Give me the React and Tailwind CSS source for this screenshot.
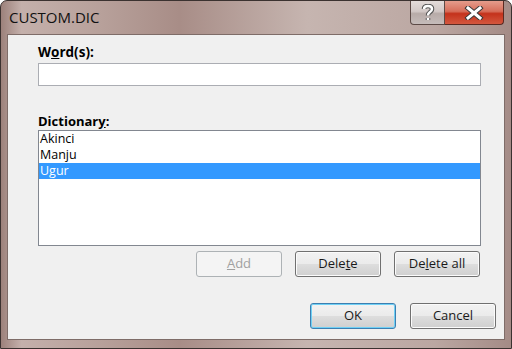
import React from 'react';

const FONT = { fontFamily: '"Open Sans", "Liberation Sans", sans-serif' };

// Win7 push button
const Button = ({ children, disabled, primary }) => {
  if (disabled) {
    return (
      <div className="w-[86px] h-[26px] rounded-[3px] border border-[#adb2b5] bg-[#f4f4f4] flex items-center justify-center text-[13px] text-[#a0a0a0]">
        {children}
      </div>
    );
  }
  return (
    <div
      className={
        'w-[86px] h-[26px] rounded-[3px] border flex items-center justify-center text-[13px] text-[#1a1a1a] bg-[linear-gradient(180deg,#f2f2f2_0%,#ebebeb_48%,#dddddd_52%,#cfcfcf_100%)] ' +
        (primary
          ? 'border-[#3c7fb1] shadow-[inset_0_0_0_1px_#6fd0f5]'
          : 'border-[#707070] shadow-[inset_0_0_0_1px_#fbfbfb]')
      }
    >
      {children}
    </div>
  );
};

const App = () => {
  const words = ['Akinci', 'Manju', 'Ugur'];
  const selected = 'Ugur';

  return (
    <div
      style={FONT}
      className="w-[512px] h-[349px] flex flex-col border border-[#3b3230] rounded-t-[7px] bg-[linear-gradient(90deg,#9c817b_0%,#c4b0ab_4%,#b7a09a_20%,#a88d87_35%,#c6b5b0_60%,#bba7a2_85%,#a48b86_100%)] overflow-hidden"
    >
      {/* TITLE BAR */}
      <div className="h-[33px] flex items-start shrink-0">
        <p className="pl-[8px] pt-[6px] text-[15px] leading-[20px] text-[#111]">CUSTOM.DIC</p>
        <div className="ml-auto mr-[7px] flex">
          <div className="w-[35px] h-[24px] rounded-bl-[4px] border border-t-0 border-[#5c4a46] bg-[linear-gradient(180deg,#e4dcda_0%,#d2c8c6_45%,#b7aba8_55%,#c6bcba_100%)] flex items-center justify-center">
            <svg width="14" height="18" viewBox="0 0 14 18">
              <path d="M3 5 Q3 2 7 2 Q11 2 11 5 Q11 7 8.5 8.5 Q7 9.5 7 11.5 M7 14 L7 16" fill="none" stroke="#555" strokeWidth="4.5" />
              <path d="M3 5 Q3 2 7 2 Q11 2 11 5 Q11 7 8.5 8.5 Q7 9.5 7 11.5 M7 14 L7 16" fill="none" stroke="#fff" strokeWidth="2.5" />
            </svg>
          </div>
          <div className="w-[59px] h-[24px] rounded-br-[4px] border border-l-0 border-t-0 border-[#5c2a22] bg-[linear-gradient(180deg,#e59c8c_0%,#d66e5a_45%,#c4321c_55%,#d4573e_100%)] flex items-center justify-center">
            <svg width="20" height="14" viewBox="0 0 20 14">
              <path d="M4 2 L16 12 M16 2 L4 12" stroke="#3a3a3a" strokeWidth="5" strokeLinecap="square" />
              <path d="M4 2 L16 12 M16 2 L4 12" stroke="#ffffff" strokeWidth="3" strokeLinecap="square" />
            </svg>
          </div>
        </div>
      </div>

      {/* CLIENT AREA */}
      <div className="flex-1 mx-[6px] mb-[8px] border border-[#7e6c68] bg-[#f0f0f0] flex flex-col pl-[30px] pr-[23px] text-[13px] text-black">
        <p className="mt-[8px] font-bold leading-[18px] text-[13.5px]">
          W<u>o</u>rd(s):
        </p>
        <div className="mt-[2px] h-[23px] border border-[#abadb3] bg-white"></div>

        <p className="mt-[26px] font-bold leading-[18px]">
          Dictionar<u>y</u>:
        </p>
        <div className="h-[116px] border border-[#828790] bg-white text-[12.5px]">
          {words.map((w) => (
            <div
              key={w}
              className={
                'h-[16px] px-[1px] leading-[16px] ' +
                (w === selected ? 'bg-[#3399ff] text-white' : '')
              }
            >
              {w}
            </div>
          ))}
        </div>

        <div className="mt-[5px] flex justify-end gap-[13px] pr-[1px]">
          <Button disabled>
            <u>A</u>dd
          </Button>
          <Button>
            Dele<u>t</u>e
          </Button>
          <Button>
            De<u>l</u>ete all
          </Button>
        </div>

        <div className="mt-[26px] flex justify-end gap-[14px] mr-[-15px]">
          <Button primary>OK</Button>
          <Button>Cancel</Button>
        </div>
      </div>
    </div>
  );
};

export default App;
